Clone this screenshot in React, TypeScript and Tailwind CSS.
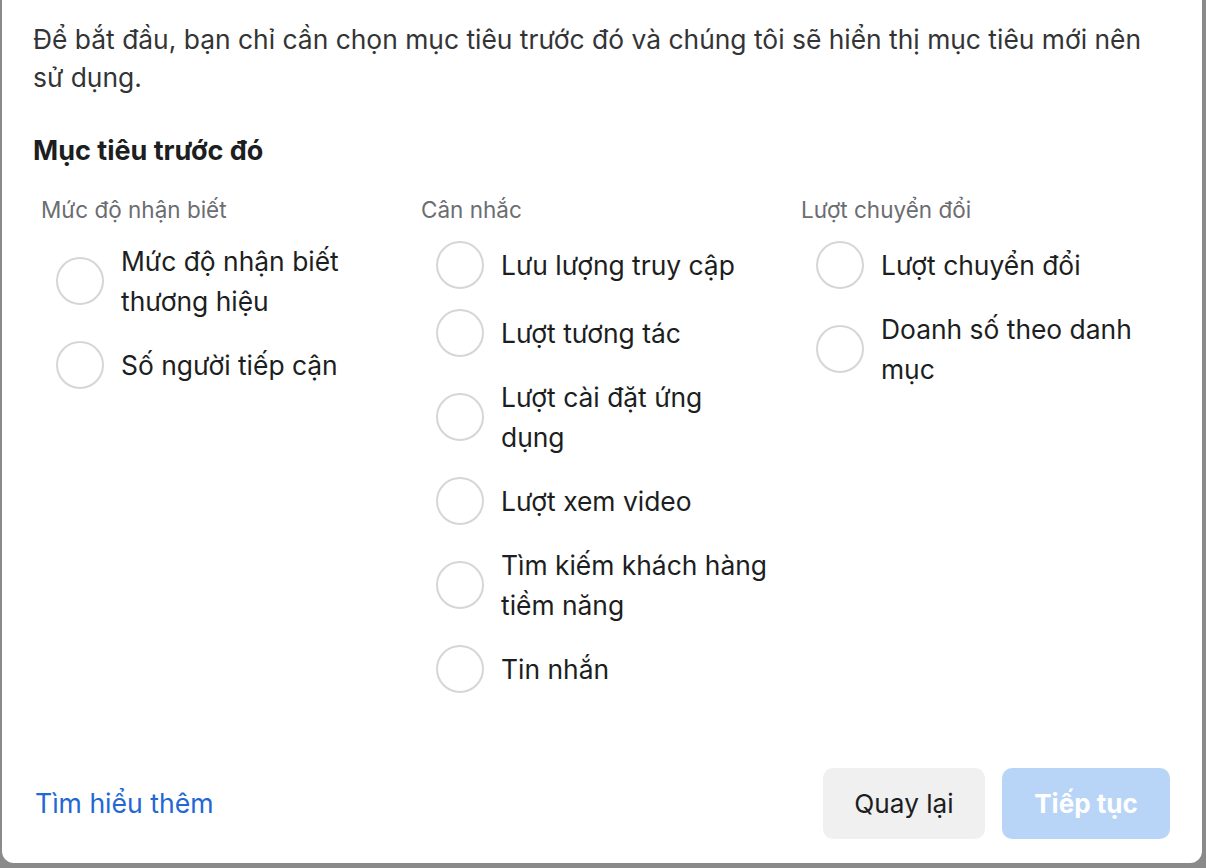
import React from "react";

type Col = { title: string; items: string[] };

const cols: Col[] = [
  { title: "Mức độ nhận biết", items: ["Mức độ nhận biết thương hiệu", "Số người tiếp cận"] },
  {
    title: "Cân nhắc",
    items: [
      "Lưu lượng truy cập",
      "Lượt tương tác",
      "Lượt cài đặt ứng dụng",
      "Lượt xem video",
      "Tìm kiếm khách hàng tiềm năng",
      "Tin nhắn",
    ],
  },
  { title: "Lượt chuyển đổi", items: ["Lượt chuyển đổi", "Doanh số theo danh mục"] },
];

function Radio({ label }: { label: string }) {
  return (
    <label className="flex items-center gap-[17px] min-h-[48px]">
      <span className="ml-[15px] w-[48px] h-[48px] shrink-0 rounded-full border-2 border-[#d6d6d6] bg-white" />
      <span className="text-[26.4px] leading-[40px] text-[#1c1e21] w-[270px]">{label}</span>
    </label>
  );
}

export default function App() {
  return (
    <div
      className="w-full h-[868px] bg-[#8a8a8a] overflow-hidden"
      style={{ fontFamily: "Inter, 'Noto Sans', sans-serif" }}
    >
      <div className="ml-[2px] w-[1200px] h-[863px] bg-white rounded-b-[12px] flex flex-col pl-[31px] pr-[32px] pt-[20px] pb-[24px]">
        <p className="text-[26.4px] leading-[38px] text-[#333436]">
          Để bắt đầu, bạn chỉ cần chọn mục tiêu trước đó và chúng tôi sẽ hiển thị mục tiêu mới nên sử dụng.
        </p>
        <h2 className="mt-[39px] text-[27px] leading-[32px] font-bold text-[#1c1e21]">Mục tiêu trước đó</h2>
        <div className="mt-[29px] flex pl-[8px]">
          {cols.map((c) => (
            <div key={c.title} className="w-[380px] shrink-0 flex flex-col">
              <div className="text-[22.5px] leading-[28px] text-[#6b6d71]">{c.title}</div>
              <div className="mt-[17px] flex flex-col gap-[20px]">
                {c.items.map((it) => (
                  <Radio key={it} label={it} />
                ))}
              </div>
            </div>
          ))}
        </div>
        <div className="mt-auto flex items-center justify-between">
          <a className="ml-[2px] text-[26.6px] text-[#2267d4]">Tìm hiểu thêm</a>
          <div className="flex gap-[17px]">
            <button className="w-[162px] h-[71px] rounded-[10px] bg-[#f0f0f0] text-[26.2px] text-[#1c1e21]">
              Quay lại
            </button>
            <button className="w-[168px] h-[71px] rounded-[10px] bg-[#b8d5f8] text-[26px] font-bold text-white">
              Tiếp tục
            </button>
          </div>
        </div>
      </div>
    </div>
  );
}
